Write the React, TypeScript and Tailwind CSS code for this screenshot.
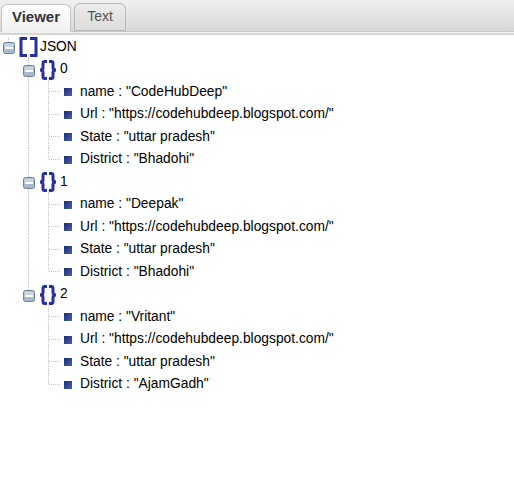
const ITEMS = [
  { name: 'CodeHubDeep', district: 'Bhadohi' },
  { name: 'Deepak', district: 'Bhadohi' },
  { name: 'Vritant', district: 'AjamGadh' },
]

const URL = 'https://codehubdeep.blogspot.com/'
const H = 22.5

function Dotted({ x1, y1, x2, y2 }: { x1: number; y1: number; x2: number; y2: number }) {
  return <line x1={x1} y1={y1} x2={x2} y2={y2} stroke="#c4c4c4" strokeWidth="1" strokeDasharray="1 1" shapeRendering="crispEdges" />
}

function Toggle({ x, y }: { x: number; y: number }) {
  return (
    <g>
      <rect x={x + 0.5} y={y + 0.5} width="11" height="11" rx="2" fill="#a9bacd" stroke="#6f8199" />
      <rect x={x + 1.5} y={y + 1.5} width="9" height="4" rx="1" fill="#c9d5e2" />
      <rect x={x + 2} y={y + 5} width="8" height="2" fill="#ffffff" />
    </g>
  )
}

function Brackets({ x }: { x: number }) {
  return (
    <g fill="none" stroke="#27309f" strokeWidth="3">
      <path d={`M${x + 8} 3.5H${x + 2}V20.5H${x + 8}`} />
      <path d={`M${x + 11} 3.5H${x + 17}V20.5H${x + 11}`} />
    </g>
  )
}

function Braces({ x }: { x: number }) {
  return (
    <g fill="none" stroke="#27309f" strokeWidth="3">
      <path d={`M${x + 8} 3.5H${x + 5.5}Q${x + 4} 3.5 ${x + 4} 5.5V9.5Q${x + 4} 12 ${x + 1} 12Q${x + 4} 12 ${x + 4} 14.5V18.5Q${x + 4} 20.5 ${x + 5.5} 20.5H${x + 8}`} />
      <path d={`M${x + 10} 3.5H${x + 12.5}Q${x + 14} 3.5 ${x + 14} 5.5V9.5Q${x + 14} 12 ${x + 17} 12Q${x + 14} 12 ${x + 14} 14.5V18.5Q${x + 14} 20.5 ${x + 12.5} 20.5H${x + 10}`} />
    </g>
  )
}

function RootRow() {
  return (
    <div className="flex items-center h-[22.5px]">
      <svg width="40" height={H} className="shrink-0">
        <Dotted x1={8.5} y1={2} x2={8.5} y2={7} />
        <Dotted x1={28.5} y1={20} x2={28.5} y2={H} />
        <Toggle x={3} y={7} />
        <Brackets x={19} />
      </svg>
      <span className="pt-[2px]">JSON</span>
    </div>
  )
}

function ObjectRow({ label, last }: { label: number; last: boolean }) {
  return (
    <div className="flex items-center h-[22.5px]">
      <svg width="60" height={H} className="shrink-0">
        <Dotted x1={28.5} y1={0} x2={28.5} y2={7} />
        {!last && <Dotted x1={28.5} y1={19} x2={28.5} y2={H} />}
        <Dotted x1={48.5} y1={20} x2={48.5} y2={H} />
        <Toggle x={23} y={7} />
        <Braces x={39} />
      </svg>
      <span className="pt-[2px]">{label}</span>
    </div>
  )
}

function LeafRow({ text, lastItem, lastKey }: { text: string; lastItem: boolean; lastKey: boolean }) {
  return (
    <div className="flex items-center h-[22.5px]">
      <svg width="80" height={H} className="shrink-0">
        <defs>
          <linearGradient id="leaf" x1="0" y1="0" x2="1" y2="1">
            <stop offset="0" stopColor="#1c2a7c" />
            <stop offset="1" stopColor="#4a62ad" />
          </linearGradient>
        </defs>
        {!lastItem && <Dotted x1={28.5} y1={0} x2={28.5} y2={H} />}
        <Dotted x1={48.5} y1={0} x2={48.5} y2={lastKey ? 12 : H} />
        <Dotted x1={49} y1={11.5} x2={60} y2={11.5} />
        <rect x="64" y="8" width="8" height="8" fill="url(#leaf)" />
      </svg>
      <span className="whitespace-nowrap pt-[2px]">{text}</span>
    </div>
  )
}

export default function App() {
  return (
    <div className="w-[514px] h-[490px] bg-white overflow-hidden font-['Liberation_Sans',Arial,sans-serif] text-[13.8px] text-black">
      <div className="h-[31px] bg-gradient-to-b from-[#f0f0f0] to-[#d8d8d8] border-b border-[#c8c8c8] flex items-end pl-px gap-[3px] box-content">
        <div className="w-[70px] h-[28px] -mb-px pb-[3px] rounded-t-md border border-b-0 border-[#c4c4c4] bg-gradient-to-b from-white to-[#f0f0f0] flex items-center justify-center font-bold text-[15px] text-[#333]">
          Viewer
        </div>
        <div className="w-[52px] h-[28px] pb-[2px] rounded-t-md border border-[#b8b8b8] bg-gradient-to-b from-[#ececec] to-[#dcdcdc] flex items-center justify-center text-[14px] text-[#555]">
          Text
        </div>
      </div>
      <div className="h-[3px] bg-[#f0f0f0] border-b-2 border-[#d6d6d6]" />
      <div>
        <RootRow />
        {ITEMS.map((item, i) => {
          const last = i === ITEMS.length - 1
          return (
            <div key={i}>
              <ObjectRow label={i} last={last} />
              <LeafRow text={`name : "${item.name}"`} lastItem={last} lastKey={false} />
              <LeafRow text={`Url : "${URL}"`} lastItem={last} lastKey={false} />
              <LeafRow text={'State : "uttar pradesh"'} lastItem={last} lastKey={false} />
              <LeafRow text={`District : "${item.district}"`} lastItem={last} lastKey={true} />
            </div>
          )
        })}
      </div>
    </div>
  )
}
